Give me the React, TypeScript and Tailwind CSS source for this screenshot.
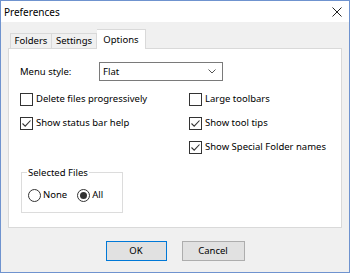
import React from "react";

function Check({ checked }: { checked?: boolean }) {
  return (
    <span className="w-[13px] h-[13px] border border-[#333333] bg-white flex items-center justify-center shrink-0">
      {checked && (
        <svg width="11" height="11" viewBox="0 0 11 11">
          <path d="M1.5 5.5 L4.2 8.2 L9.5 2.5" fill="none" stroke="#333333" strokeWidth="1.1" />
        </svg>
      )}
    </span>
  );
}

function CheckRow({ label, checked }: { label: string; checked?: boolean }) {
  return (
    <div className="h-[24px] flex items-center gap-[3px]">
      <Check checked={checked} />
      <span>{label}</span>
    </div>
  );
}

function Radio({ label, checked }: { label: string; checked?: boolean }) {
  return (
    <div className="flex items-center gap-[2px]">
      <span className="w-[13px] h-[13px] rounded-full border border-[#333333] bg-white flex items-center justify-center">
        {checked && <span className="w-[7px] h-[7px] rounded-full bg-[#333333]" />}
      </span>
      <span>{label}</span>
    </div>
  );
}

export default function App() {
  return (
    <div
      className="w-[350px] h-[273px] border border-[#6f93cf] bg-[#f0f0f0] flex flex-col text-[9.5px] text-black leading-none"
      style={{ fontFamily: '"Noto Sans", "Open Sans", sans-serif' }}
    >
      <div className="h-[21px] bg-white flex items-center justify-between pl-[3px] pr-[7px] shrink-0">
        <span className="text-[10px]">Preferences</span>
        <svg width="10" height="10" viewBox="0 0 10 10">
          <path d="M0.5 0.5 L9.5 9.5 M9.5 0.5 L0.5 9.5" stroke="#222222" strokeWidth="1" />
        </svg>
      </div>

      <div className="flex items-end pl-[9px] mt-[7px] h-[19px] shrink-0">
        <div className="w-[42px] h-[15px] flex items-center justify-center bg-[#f0f0f0] border border-b-0 border-[#d9d9d9]">Folders</div>
        <div className="w-[45px] h-[15px] flex items-center justify-center bg-[#f0f0f0] border border-b-0 border-l-0 border-[#d9d9d9]">Settings</div>
        <div className="w-[49px] h-[20px] flex items-center justify-center bg-white border border-b-0 border-l-0 border-[#d9d9d9] -mb-px relative z-10">Options</div>
      </div>

      <div className="mx-[7px] h-[180px] bg-white border border-[#d9d9d9] pl-[11px] pr-[12px] pt-[13px] flex flex-col shrink-0">
        <div className="flex items-center h-[19px]">
          <span className="w-[79px]">Menu style:</span>
          <div className="w-[124px] h-[19px] border border-[#7a7a7a] flex items-center justify-between pl-[3px] pr-[6px]">
            <span>Flat</span>
            <svg width="8" height="5" viewBox="0 0 8 5">
              <path d="M0.5 0.5 L4 4 L7.5 0.5" fill="none" stroke="#555555" strokeWidth="1" />
            </svg>
          </div>
        </div>

        <div className="grid grid-cols-[169px_1fr] mt-[6px]">
          <CheckRow label="Delete files progressively" />
          <CheckRow label="Large toolbars" />
          <CheckRow label="Show status bar help" checked />
          <CheckRow label="Show tool tips" checked />
          <div />
          <CheckRow label="Show Special Folder names" checked />
        </div>

        <fieldset className="ml-[1px] mt-[9px] w-[102px] h-[45px] border border-[#dcdcdc]">
          <legend className="ml-[5px] px-[1px]">Selected Files</legend>
          <div className="flex items-center gap-[10px] pl-[6px] pt-[11px]">
            <Radio label="None" />
            <Radio label="All" checked />
          </div>
        </fieldset>
      </div>

      <div className="flex justify-center gap-[15px] mt-[13px]">
        <button className="w-[61px] h-[20px] border border-[#0078d7] bg-[#e1e1e1]">OK</button>
        <button className="w-[63px] h-[20px] border border-[#adadad] bg-[#e1e1e1]">Cancel</button>
      </div>
    </div>
  );
}
